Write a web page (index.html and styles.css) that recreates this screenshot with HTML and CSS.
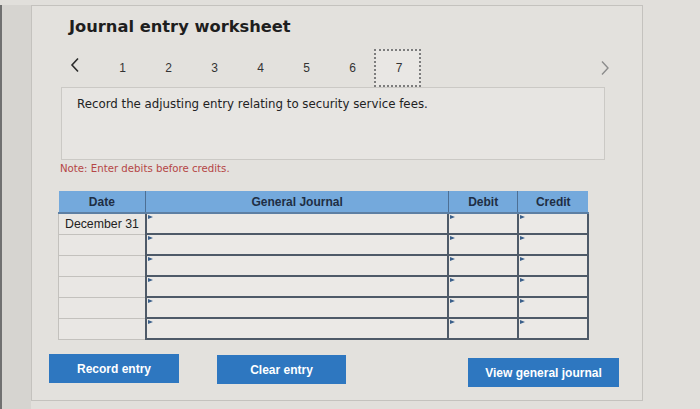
FILE: index.html
```html
<!DOCTYPE html>
<html lang="en">
<head>
<meta charset="utf-8">
<title>Journal entry worksheet</title>
<link rel="stylesheet" href="styles.css">
</head>
<body>
<div class="page">
  <div class="side"></div>
  <main class="card">
    <h1 class="title">Journal entry worksheet</h1>
    <nav class="steps">
      <span class="arrow prev"><svg width="10" height="16" viewBox="0 0 10 16"><path d="M8 1.5 L2 8 L8 14.5" fill="none" stroke="#2b2b2b" stroke-width="1.6"/></svg></span>
      <span class="step">1</span>
      <span class="step">2</span>
      <span class="step">3</span>
      <span class="step">4</span>
      <span class="step">5</span>
      <span class="step">6</span>
      <span class="step current">7</span>
      <span class="arrow next"><svg width="10" height="16" viewBox="0 0 10 16"><path d="M2 1.5 L8 8 L2 14.5" fill="none" stroke="#8c8c8c" stroke-width="1.4"/></svg></span>
    </nav>
    <div class="prompt">Record the adjusting entry relating to security service fees.</div>
    <p class="note">Note: Enter debits before credits.</p>
    <table class="journal">
      <thead>
        <tr><th class="c-date">Date</th><th class="c-gj">General Journal</th><th class="c-dr">Debit</th><th class="c-cr">Credit</th></tr>
      </thead>
      <tbody>
        <tr><td class="date">December 31</td><td class="inp"></td><td class="inp"></td><td class="inp"></td></tr>
        <tr><td class="date"></td><td class="inp"></td><td class="inp"></td><td class="inp"></td></tr>
        <tr><td class="date"></td><td class="inp"></td><td class="inp"></td><td class="inp"></td></tr>
        <tr><td class="date"></td><td class="inp"></td><td class="inp"></td><td class="inp"></td></tr>
        <tr><td class="date"></td><td class="inp"></td><td class="inp"></td><td class="inp"></td></tr>
        <tr><td class="date"></td><td class="inp"></td><td class="inp"></td><td class="inp"></td></tr>
      </tbody>
    </table>
    <div class="actions">
      <button class="btn record">Record entry</button>
      <button class="btn clear">Clear entry</button>
      <button class="btn view">View general journal</button>
    </div>
  </main>
</div>
</body>
</html>
```
FILE: styles.css
```css
html, body {
  margin: 0;
  padding: 0;
}
body {
  width: 700px;
  height: 409px;
  overflow: hidden;
  background: #e1dfdb;
  font-family: "DejaVu Sans", Verdana, sans-serif;
}
.page {
  display: flex;
  height: 409px;
  padding-top: 5px;
  box-sizing: border-box;
}
.side {
  width: 31px;
  border-left: 2px solid #707070;
  background: #d6d4d0;
  box-sizing: border-box;
}
.card {
  width: 612px;
  height: 396px;
  box-sizing: border-box;
  background: #e3e1dd;
  border: 1px solid #c4c2be;
  display: flex;
  flex-direction: column;
}
.title {
  margin: 11px 0 0 37px;
  font-size: 16.3px;
  line-height: 20px;
  font-weight: bold;
  color: #1e1e1e;
}
.steps {
  display: flex;
  align-items: center;
  height: 38px;
  margin: 12px 32px 0 30px;
  font-family: "Liberation Sans", Arial, sans-serif;
  font-size: 12px;
  color: #333;
}
.arrow {
  display: flex;
  align-items: center;
  height: 38px;
}
.prev {
  width: 28px;
  padding-left: 8px;
  margin-top: -6px;
}
.next {
  margin-left: auto;
  margin-top: 0;
}
.step {
  width: 46px;
  height: 38px;
  display: flex;
  align-items: center;
  justify-content: center;
  box-sizing: border-box;
  padding-left: 3px;
}
.step.current {
  width: 47px;
  border: 2px dotted #7d7d7d;
  background: #e9e7e4;
}
.prompt {
  margin-left: 29px;
  width: 544px;
  height: 73px;
  box-sizing: border-box;
  border: 1px solid #cbc9c5;
  background: #e7e5e2;
  padding: 9px 0 0 15px;
  font-size: 11.8px;
  line-height: 14px;
  color: #222;
}
.note {
  margin: 3px 0 0 28px;
  font-size: 10.2px;
  line-height: 12px;
  color: #b54646;
}
.journal {
  margin: 16px 0 0 26px;
  width: 531px;
  border-collapse: collapse;
  font-family: "Liberation Sans", Arial, sans-serif;
  font-size: 12.3px;
}
.journal th {
  height: 21px;
  padding: 0;
  background: #74a9dc;
  color: #1f2e44;
  font-size: 12px;
  font-weight: bold;
  border-left: 1px solid #4d6f94;
  border-bottom: 2px solid #5d7fa3;
}
.journal th:first-child { border-left: none; }
.c-date { width: 87px; }
.c-gj { width: 305px; }
.c-dr { width: 69px; }
.c-cr { width: 70px; }
.journal td {
  height: 19px;
  padding: 0;
  background: #e9e7e4;
}
.journal td.date {
  border: 1px solid #c3c1bd;
  padding-left: 6px;
  color: #222;
}
.journal td.inp {
  position: relative;
  border: 2px solid #4e5a68;
  background: #ebe9e6;
}
.journal td.inp::before {
  content: "";
  position: absolute;
  left: 1px;
  top: 1px;
  border-left: 5px solid #3a5f8a;
  border-top: 2.5px solid transparent;
  border-bottom: 2.5px solid transparent;
}
.actions {
  display: flex;
  margin: 14px 23px 0 17px;
}
.btn {
  height: 29px;
  border: none;
  background: #2e77c0;
  color: #ffffff;
  font-family: "Liberation Sans", Arial, sans-serif;
  font-size: 12px;
  font-weight: bold;
  padding: 0;
}
.record { width: 130px; }
.clear { width: 129px; margin-left: 38px; margin-top: 1px; }
.view { width: 151px; margin-left: auto; margin-top: 4px; }
```
